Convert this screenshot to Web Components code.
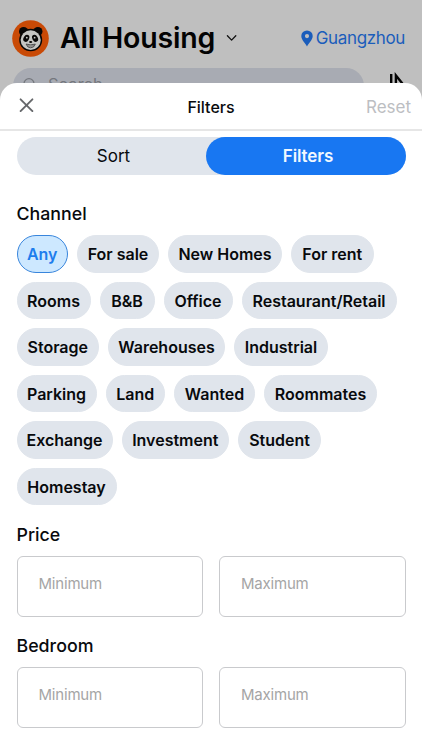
<!DOCTYPE html>
<html lang="en">
<head>
<meta charset="utf-8">
<meta name="viewport" content="width=device-width, initial-scale=1">
<title>All Housing</title>
<style>
  body {
    margin: 0;
    height: 750px;
    overflow: hidden;
    position: relative;
    background: #bfbfbf;
    color: #080a0d;
    font-family: Inter, "Liberation Sans", sans-serif;
  }
</style>
</head>
<body>
<housing-header city="Guangzhou">All Housing</housing-header>
<filter-sheet></filter-sheet>

<script>
class HousingHeader extends HTMLElement {
  connectedCallback() {
    this.attachShadow({ mode: 'open' });
    this.shadowRoot.innerHTML = `
      <style>
        :host {
          display: block;
          padding: 19px 17px 0 12px;
        }

        .top {
          display: flex;
          align-items: center;
          height: 38px;
        }

        h1 {
          margin: 0 0 0 11px;
          font-size: 28.5px;
          font-weight: 600;
          line-height: 38px;
          letter-spacing: -0.2px;
          color: #030303;
          white-space: nowrap;
        }

        .chevron {
          margin-left: 11px;
        }

        .city {
          margin-left: auto;
          display: flex;
          align-items: center;
          gap: 3px;
          color: #1b5dbb;
          font-size: 17px;
          line-height: 24px;
          letter-spacing: -0.35px;
        }

        .tools {
          display: flex;
          justify-content: space-between;
          margin-top: 11px;
          padding-left: 1px;
        }

        .search {
          display: flex;
          width: 351px;
          height: 36px;
          box-sizing: border-box;
          padding: 9px 0 0 10px;
          gap: 13px;
          border-radius: 18px;
          background: #a8abb3;
          color: #74777d;
          font-size: 16.5px;
          line-height: 15px;
        }
      </style>
      <div class="top">
        <svg width="37" height="37" viewBox="0 0 37 37">
          <circle cx="18.5" cy="18.5" r="18.3" fill="#c94a06"/>
          <g fill="#080706">
            <circle cx="11.6" cy="11.6" r="4.6"/>
            <circle cx="25.9" cy="11.6" r="4.6"/>
            <ellipse cx="18.7" cy="20" rx="11.5" ry="11.2"/>
          </g>
          <ellipse cx="18.7" cy="20.1" rx="10.1" ry="9.8" fill="#c5c5c2"/>
          <g fill="#080706">
            <ellipse cx="14.3" cy="18.3" rx="2.7" ry="3.7" transform="rotate(30 14.3 18.3)"/>
            <ellipse cx="23.1" cy="18.3" rx="2.7" ry="3.7" transform="rotate(-30 23.1 18.3)"/>
            <ellipse cx="18.7" cy="22" rx="1.6" ry="1"/>
          </g>
          <circle cx="14.8" cy="17.7" r=".9" fill="#c5c5c2"/>
          <circle cx="22.6" cy="17.7" r=".9" fill="#c5c5c2"/>
          <path d="M14.1 24.1q4.6 1.5 9.2 0q-1.2 3.7-4.6 3.7t-4.6-3.7z" fill="#b7b7b4" stroke="#333" stroke-width=".8"/>
          <path d="M15.4 25.7q3.3 1 6.6 0" fill="none" stroke="#333" stroke-width=".5"/>
        </svg>
        <h1><slot></slot></h1>
        <svg class="chevron" width="11" height="8" viewBox="0 0 11 8" fill="none" stroke="#111" stroke-width="1.3" stroke-linecap="round" stroke-linejoin="round">
          <path d="M1.4 1.7l4.2 4.4 4.2-4.4"/>
        </svg>
        <div class="city">
          <svg width="12" height="17" viewBox="0 0 12 17">
            <path fill="#1b5dbb" fill-rule="evenodd" d="M6 .4a5.7 5.7 0 0 0-5.7 5.7C.3 10.1 4.4 13.3 6 16.6 7.6 13.3 11.7 10.1 11.7 6.1A5.7 5.7 0 0 0 6 .4zM6 4a2.1 2.1 0 1 1 0 4.2 2.1 2.1 0 0 1 0-4.2z"/>
          </svg>
          <span></span>
        </div>
      </div>
      <div class="tools">
        <div class="search">
          <svg width="12" height="13" viewBox="0 0 12 13" fill="none" stroke="#74777d" stroke-width="1.3">
            <circle cx="6" cy="6.7" r="5"/>
            <path d="M9 10l3 3"/>
          </svg>
          Search
        </div>
        <svg width="16" height="20" viewBox="0 0 16 20" fill="none" stroke="#050505" stroke-width="2.4">
          <path d="M2.2 6v14M6.900 20V7.500l6.500 8"/>
        </svg>
      </div>
    `;
    this.shadowRoot.querySelector('.city span').textContent = this.getAttribute('city');
  }
}

class SegmentedTabs extends HTMLElement {
  connectedCallback() {
    this.attachShadow({ mode: 'open' });
    this.shadowRoot.innerHTML = `
      <style>
        :host {
          display: grid;
          grid-template-columns: 189px 200px;
          height: 38px;
          border-radius: 19px;
          background: #e0e5ec;
          font-size: 17px;
          line-height: 38px;
          text-align: center;
        }

        .sort {
          padding-left: 5px;
        }

        .active {
          padding-left: 5px;
          border-radius: 19px;
          background: #1877f2;
          color: #f1f8ff;
          font-weight: 600;
          letter-spacing: -0.1px;
        }
      </style>
      <div class="sort">Sort</div>
      <div class="active">Filters</div>
    `;
  }
}

class FilterChip extends HTMLElement {
  connectedCallback() {
    this.attachShadow({ mode: 'open' });
    this.shadowRoot.innerHTML = `
      <style>
        :host {
          display: block;
          box-sizing: border-box;
          height: 37.4px;
          border: 1px solid #e0e5ec;
          border-radius: 19px;
          background: #e0e5ec;
          font-size: 16px;
          font-weight: 570;
          line-height: 36px;
          text-align: center;
          white-space: nowrap;
        }

        :host([selected]) {
          border-color: #3885dc;
          background: #cde8ff;
          color: #1d7ded;
        }
      </style>
      <slot></slot>
    `;
    this.style.width = this.getAttribute('width') + 'px';
  }
}

class FilterSection extends HTMLElement {
  connectedCallback() {
    this.attachShadow({ mode: 'open' });
    this.shadowRoot.innerHTML = `
      <style>
        :host {
          display: block;
        }

        h2 {
          margin: 0;
          font-size: 17.8px;
          font-weight: 500;
          line-height: 22px;
        }
      </style>
      <h2></h2>
      <slot></slot>
    `;
    this.shadowRoot.querySelector('h2').textContent = this.getAttribute('heading');
  }
}

class RangeFields extends HTMLElement {
  connectedCallback() {
    this.attachShadow({ mode: 'open' });
    this.shadowRoot.innerHTML = `
      <style>
        :host {
          display: grid;
          grid-template-columns: 1fr 1fr;
          gap: 16px;
          margin-top: 10px;
        }

        div {
          box-sizing: border-box;
          height: 61px;
          padding: 17px 21px 0;
          border: 1px solid #c9cacd;
          border-radius: 6px;
          color: #a5a5a5;
          font-size: 15px;
          line-height: 20px;
          letter-spacing: -0.2px;
        }
      </style>
      <div>Minimum</div>
      <div>Maximum</div>
    `;
  }
}

class FilterSheet extends HTMLElement {
  connectedCallback() {
    const rows = [
      [['Any', 51.5], ['For sale', 82], ['New Homes', 114], ['For rent', 82.5]],
      [['Rooms', 74], ['B&amp;B', 55], ['Office', 69], ['Restaurant/Retail', 155]],
      [['Storage', 82.5], ['Warehouses', 117], ['Industrial', 94]],
      [['Parking', 80], ['Land', 59.5], ['Wanted', 81], ['Roommates', 113]],
      [['Exchange', 96], ['Investment', 107.5], ['Student', 83]],
      [['Homestay', 100]]
    ];
    this.attachShadow({ mode: 'open' });
    this.shadowRoot.innerHTML = `
      <style>
        :host {
          display: block;
          position: absolute;
          inset: 83px 0 0;
          border-radius: 17px 17px 0 0;
          background: #fff;
          overflow: hidden;
        }

        header {
          display: grid;
          grid-template-columns: 1fr auto 1fr;
          align-items: center;
          box-sizing: border-box;
          height: 48px;
          padding: 0 11px 0 19px;
          border-bottom: 2px solid #e6e6e6;
          line-height: 24px;
        }

        header svg {
          margin-top: -2px;
        }

        .title {
          font-size: 16px;
          font-weight: 500;
          margin-left: -8px;
          padding-top: 1px;
        }

        .reset {
          justify-self: end;
          padding-top: 1px;
          color: #bcbec2;
          font-size: 17px;
        }

        main {
          padding: 6px 16.5px 0;
        }

        .channel {
          margin-top: 28px;
        }

        .chips {
          display: flex;
          flex-direction: column;
          gap: 9.1px;
          margin-top: 10.4px;
        }

        .row {
          display: flex;
          gap: 9px;
        }

        .price {
          margin-top: 18.7px;
        }

        .bedroom {
          margin-top: 18.5px;
        }
      </style>
      <header>
        <svg width="15" height="15" viewBox="0 0 15 15" fill="none" stroke="#66686b" stroke-width="1.9" stroke-linecap="round">
          <path d="M1.6 1.3l11.8 11.8M13.4 1.3L1.6 13.1"/>
        </svg>
        <div class="title">Filters</div>
        <div class="reset">Reset</div>
      </header>
      <main>
        <segmented-tabs></segmented-tabs>
        <filter-section class="channel" heading="Channel">
          <div class="chips">
            ${rows.map(row => `<div class="row">${row.map(([label, width]) =>
              `<filter-chip width="${width}"${label === 'Any' ? ' selected' : ''}>${label}</filter-chip>`).join('')}</div>`).join('')}
          </div>
        </filter-section>
        <filter-section class="price" heading="Price"><range-fields></range-fields></filter-section>
        <filter-section class="bedroom" heading="Bedroom"><range-fields></range-fields></filter-section>
      </main>
    `;
  }
}

customElements.define('housing-header', HousingHeader);
customElements.define('segmented-tabs', SegmentedTabs);
customElements.define('filter-chip', FilterChip);
customElements.define('filter-section', FilterSection);
customElements.define('range-fields', RangeFields);
customElements.define('filter-sheet', FilterSheet);
</script>
</body>
</html>
